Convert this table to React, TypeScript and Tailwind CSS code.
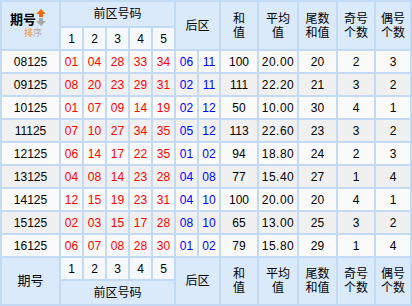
const rows = [
  { id: "08125", front: ["01", "04", "28", "33", "34"], back: ["06", "11"], sum: "100", avg: "20.00", tail: "20", odd: "2", even: "3" },
  { id: "09125", front: ["08", "20", "23", "29", "31"], back: ["02", "11"], sum: "111", avg: "22.20", tail: "21", odd: "3", even: "2" },
  { id: "10125", front: ["01", "07", "09", "14", "19"], back: ["02", "12"], sum: "50", avg: "10.00", tail: "30", odd: "4", even: "1" },
  { id: "11125", front: ["07", "10", "27", "34", "35"], back: ["05", "12"], sum: "113", avg: "22.60", tail: "23", odd: "3", even: "2" },
  { id: "12125", front: ["06", "14", "17", "22", "35"], back: ["01", "02"], sum: "94", avg: "18.80", tail: "24", odd: "2", even: "3" },
  { id: "13125", front: ["04", "08", "14", "23", "28"], back: ["04", "08"], sum: "77", avg: "15.40", tail: "27", odd: "1", even: "4" },
  { id: "14125", front: ["12", "15", "19", "23", "31"], back: ["04", "10"], sum: "100", avg: "20.00", tail: "20", odd: "4", even: "1" },
  { id: "15125", front: ["02", "03", "15", "17", "28"], back: ["08", "10"], sum: "65", avg: "13.00", tail: "25", odd: "3", even: "2" },
  { id: "16125", front: ["06", "07", "08", "28", "30"], back: ["01", "02"], sum: "79", avg: "15.80", tail: "29", odd: "1", even: "4" },
];

const widths = [57, 21, 21, 21, 21, 21, 21, 20, 36, 38, 37, 36, 34];

const head = "bg-[#dbeafb] text-black text-[12px] leading-[14px] p-0 text-center align-middle";
const sub = "bg-[#f5f9fe] text-black text-[12px] p-0 text-center align-middle";

const SortIcon = () => (
  <svg width="10" height="17" viewBox="0 0 10 17" className="inline-block">
    <path d="M5 0 L10 5 L7 5 L7 8 L3 8 L3 5 L0 5 Z" fill="#f26c0d" />
    <path d="M3 9 L7 9 L7 12 L10 12 L5 17 L0 12 L3 12 Z" fill="#a8a8a8" />
  </svg>
);

function StatHeads() {
  return (
    <>
      <td rowSpan={2} className={head}>和<br />值</td>
      <td rowSpan={2} className={head}>平均<br />值</td>
      <td rowSpan={2} className={head}>尾数<br />和值</td>
      <td rowSpan={2} className={head}>奇号<br />个数</td>
      <td rowSpan={2} className={head}>偶号<br />个数</td>
    </>
  );
}

function NumberRow() {
  return (
    <tr>
      {[1, 2, 3, 4, 5].map((n) => (
        <td key={n} className={`${sub} h-[21px]`}>{n}</td>
      ))}
    </tr>
  );
}

export default function App() {
  return (
    <div className="w-[412px] h-[306px] overflow-hidden bg-white">
      <table
        className="table-fixed w-[412px] border-separate border-spacing-[2px] bg-[#c2daf3]"
        style={{ fontFamily: '"Liberation Sans", "Noto Sans CJK SC", sans-serif' }}
      >
        <colgroup>
          {widths.map((w, i) => (
            <col key={i} style={{ width: w }} />
          ))}
        </colgroup>
        <tbody>
          <tr>
            <td rowSpan={2} className={`${head} align-top pt-[7px]`}>
              <div className="flex items-start justify-center pr-[5px]">
                <span className="text-[13px] leading-[16px] font-bold mt-[3px]">期号</span>
                <SortIcon />
              </div>
              <div className="text-[9px] leading-[10px] pl-[5px]">
                <span className="text-[#f58a3a]">排</span>
                <span className="text-[#b9a8a0]">序</span>
              </div>
            </td>
            <td colSpan={5} className={`${head} h-[24px]`}>前区号码</td>
            <td rowSpan={2} colSpan={2} className={head}>后区</td>
            <StatHeads />
          </tr>
          <NumberRow />
          {rows.map((r, i) => (
            <tr key={r.id} className={i % 2 === 0 ? "bg-[#fafafa]" : "bg-[#f0f0f0]"}>
              <td className="h-[21px] p-0 text-center text-[12px] text-black">{r.id}</td>
              {r.front.map((n, j) => (
                <td key={j} className="p-0 text-center text-[12px] text-[#ff0000]">{n}</td>
              ))}
              {r.back.map((n, j) => (
                <td key={j} className="p-0 text-center text-[12px] text-[#0000ff]">{n}</td>
              ))}
              <td className="p-0 text-center text-[12px] text-black">{r.sum}</td>
              <td className="p-0 text-center text-[12px] text-black tracking-[0.5px]">{r.avg}</td>
              <td className="p-0 text-center text-[12px] text-black">{r.tail}</td>
              <td className="p-0 text-center text-[12px] text-black">{r.odd}</td>
              <td className="p-0 text-center text-[12px] text-black">{r.even}</td>
            </tr>
          ))}
          <tr>
            <td rowSpan={2} className={`${head} text-[13px]`}>期号</td>
            {[1, 2, 3, 4, 5].map((n) => (
              <td key={n} className={`${sub} h-[21px]`}>{n}</td>
            ))}
            <td rowSpan={2} colSpan={2} className={head}>后区</td>
            <StatHeads />
          </tr>
          <tr>
            <td colSpan={5} className={`${head} h-[23px]`}>前区号码</td>
          </tr>
        </tbody>
      </table>
    </div>
  );
}
